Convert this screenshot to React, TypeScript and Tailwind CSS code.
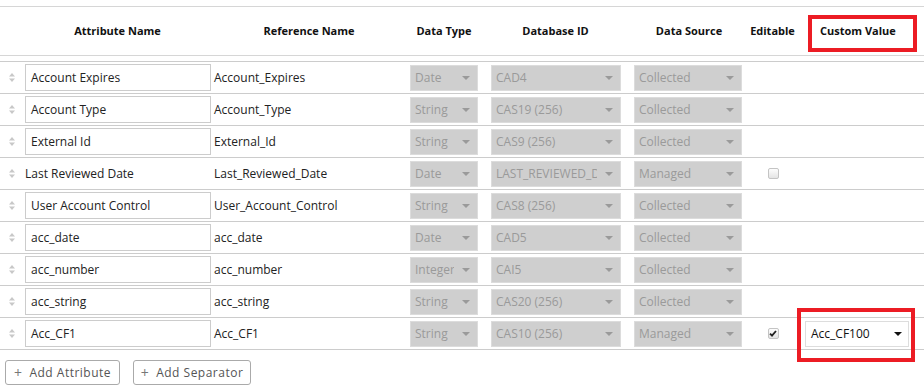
import React from 'react';

type Row = {
  name: string;
  ref: string;
  type: string;
  dbId: string;
  source: string;
  editable?: boolean;
  custom?: string;
  plain?: boolean;
};

const rows: Row[] = [
  { name: 'Account Expires', ref: 'Account_Expires', type: 'Date', dbId: 'CAD4', source: 'Collected' },
  { name: 'Account Type', ref: 'Account_Type', type: 'String', dbId: 'CAS19 (256)', source: 'Collected' },
  { name: 'External Id', ref: 'External_Id', type: 'String', dbId: 'CAS9 (256)', source: 'Collected' },
  { name: 'Last Reviewed Date', ref: 'Last_Reviewed_Date', type: 'Date', dbId: 'LAST_REVIEWED_DATE', source: 'Managed', editable: false, plain: true },
  { name: 'User Account Control', ref: 'User_Account_Control', type: 'String', dbId: 'CAS8 (256)', source: 'Collected' },
  { name: 'acc_date', ref: 'acc_date', type: 'Date', dbId: 'CAD5', source: 'Collected' },
  { name: 'acc_number', ref: 'acc_number', type: 'Integer', dbId: 'CAI5', source: 'Collected' },
  { name: 'acc_string', ref: 'acc_string', type: 'String', dbId: 'CAS20 (256)', source: 'Collected' },
  { name: 'Acc_CF1', ref: 'Acc_CF1', type: 'String', dbId: 'CAS10 (256)', source: 'Managed', editable: true, custom: 'Acc_CF100' },
];

const cols = 'grid grid-cols-[22px_191px_192px_78px_145px_122px_45px_129px]';

const Caret = ({ color }: { color: string }) => (
  <svg width="8" height="4" viewBox="0 0 8 4" className="shrink-0">
    <path d="M0 0h8L4 4z" fill={color} />
  </svg>
);

const DragHandle = () => (
  <svg width="6" height="9" viewBox="0 0 6 9">
    <path d="M3 0L6 3.5H0z" fill="#c8c8c8" />
    <path d="M3 9L6 5.5H0z" fill="#c8c8c8" />
  </svg>
);

const DisabledSelect = ({ value, className }: { value: string; className: string }) => (
  <div className={`flex h-[26px] items-center justify-between overflow-hidden border border-[#dcdcdc] bg-[#cfcfcf] pl-[4px] pr-[7px] text-[12px] text-[#9a9a9a] ${className}`}>
    <span className="mr-[8px] min-w-0 flex-1 overflow-hidden whitespace-nowrap">{value}</span>
    <Caret color="#9a9a9a" />
  </div>
);

const Checkbox = ({ checked }: { checked: boolean }) => (
  <div className="flex h-[11px] w-[11px] items-center justify-center rounded-[2px] border border-[#c4c4c4] bg-gradient-to-b from-[#fdfdfd] to-[#e4e4e4]">
    {checked && (
      <svg width="8" height="7" viewBox="0 0 8 7">
        <path d="M1 3.6L3 5.6L7 1" stroke="#222" strokeWidth="1.8" fill="none" />
      </svg>
    )}
  </div>
);

const Th = ({ children }: { children?: React.ReactNode }) => (
  <div className="flex items-center justify-center">{children}</div>
);

export default function App() {
  return (
    <div className="relative h-[389px] w-[924px] bg-white text-[#222]" style={{ fontFamily: '"Open Sans", "Liberation Sans", sans-serif' }}>
      <div className="h-[6px]" />
      {/* header */}
      <div className={`${cols} h-[50px] border-y border-[#d6d6d6] text-[11px] font-bold text-[#111]`}>
        <Th />
        <Th>Attribute Name</Th>
        <Th>Reference Name</Th>
        <Th>Data Type</Th>
        <Th>Database ID</Th>
        <Th>Data Source</Th>
        <Th>Editable</Th>
        <div className="relative flex items-center pl-[25px]">
          Custom Value
          <div className="absolute left-[13px] top-[8px] h-[37px] w-[109px] border-[4px] border-[#ec1c24]" />
        </div>
      </div>
      <div className="h-[5px]" />
      {/* body */}
      <div className="border-t border-[#cccccc]">
        {rows.map((r) => (
          <div key={r.name} className={`${cols} h-[32px] items-center border-b border-[#cccccc] text-[12px]`}>
            <div className="flex justify-center pl-[1px]">
              <DragHandle />
            </div>
            <div>
              {r.plain ? (
                <div className="pl-[3px]">{r.name}</div>
              ) : (
                <div className="ml-[3px] flex h-[27px] w-[186px] items-center border border-[#cccccc] bg-white pl-[5px]">{r.name}</div>
              )}
            </div>
            <div className="pl-[1px]">{r.ref}</div>
            <div>
              <DisabledSelect value={r.type} className="ml-[5px] w-[68px]" />
            </div>
            <div>
              <DisabledSelect value={r.dbId} className="ml-[8px] w-[130px]" />
            </div>
            <div>
              <DisabledSelect value={r.source} className="ml-[6px] w-[108px]" />
            </div>
            <div className="flex justify-center pl-[1px]">
              {r.editable !== undefined && <Checkbox checked={r.editable} />}
            </div>
            <div className="relative">
              {r.custom && (
                <>
                  <div className="ml-[10px] flex h-[26px] w-[104px] items-center justify-between border border-[#dddddd] bg-white pl-[5px] pr-[6px] text-[12px] text-[#111]">
                    <span>{r.custom}</span>
                    <Caret color="#111" />
                  </div>
                  <div className="absolute left-[2px] top-[-13px] h-[54px] w-[118px] border-[4px] border-[#ec1c24]" />
                </>
              )}
            </div>
          </div>
        ))}
      </div>
      {/* actions */}
      <div className="flex gap-[13px] pl-[5px] pt-[10px]">
        <button className="flex h-[25px] w-[115px] items-center justify-center gap-[7px] rounded-[3px] border border-[#aaaaaa] bg-white text-[12px] tracking-[0.5px] text-[#555]">
          <span className="text-[14px] leading-none text-[#777]">+</span>
          <span>Add Attribute</span>
        </button>
        <button className="flex h-[25px] w-[118px] items-center justify-center gap-[7px] rounded-[3px] border border-[#aaaaaa] bg-white text-[12px] tracking-[0.5px] text-[#555]">
          <span className="text-[14px] leading-none text-[#777]">+</span>
          <span>Add Separator</span>
        </button>
      </div>
    </div>
  );
}
